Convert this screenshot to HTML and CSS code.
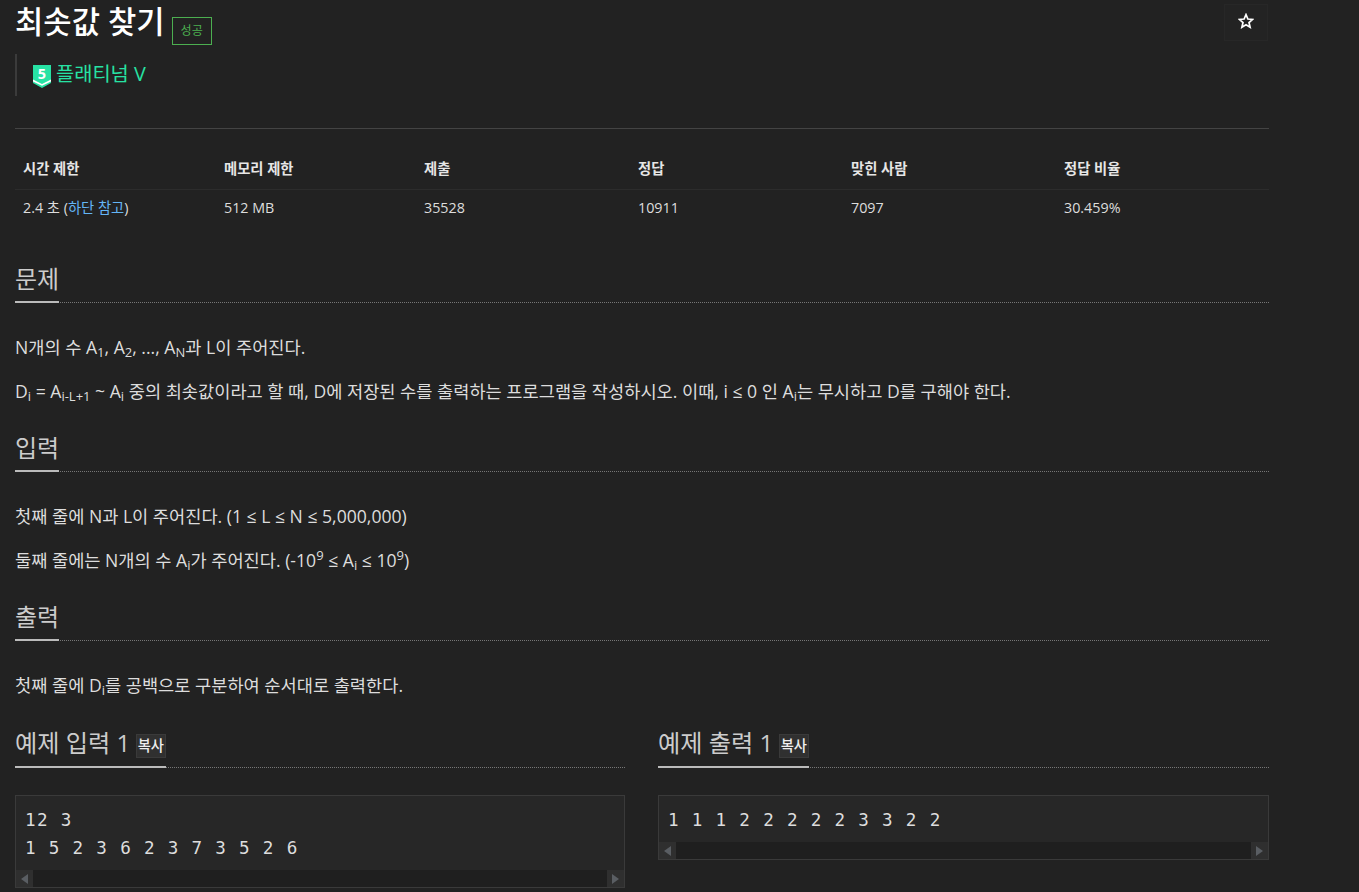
FILE: index.html
```html
<!DOCTYPE html>
<html lang="ko">
<head>
<meta charset="utf-8">
<title>최솟값 찾기</title>
<link rel="stylesheet" href="styles.css">
</head>
<body>
<main class="page">
  <header class="head">
    <div class="title-row">
      <h1 class="title">최솟값 찾기</h1>
      <span class="label">성공</span>
    </div>
    <button class="star" type="button" aria-label="즐겨찾기">
      <svg class="star-icon" width="16" height="16" viewBox="0 0 16 16"><path d="M8 1.6l1.9 4.4 4.7.4-3.6 3.1 1.1 4.7L8 11.7l-4.1 2.5L5 9.5 1.4 6.4l4.7-.4z" fill="none" stroke="#fff" stroke-width="1.7" stroke-linejoin="miter"/></svg>
    </button>
  </header>
  <div class="tier">
    <svg class="tier-icon" width="18" height="24" viewBox="0 0 18 24"><path d="M0 0h18v18l-9 5-9-5z" fill="#27e2a4"/><path d="M0 16.4l9 4.4 9-4.4v-1.8l-9 4.4-9-4.4z" fill="#fff"/><text x="9" y="13.6" text-anchor="middle" class="tier-num">5</text></svg>
    <span class="tier-name">플래티넘 V</span>
  </div>
  <hr class="rule">
  <table class="info">
    <thead>
      <tr><th class="c1">시간 제한</th><th class="c2">메모리 제한</th><th class="c3">제출</th><th class="c4">정답</th><th class="c5">맞힌 사람</th><th>정답 비율</th></tr>
    </thead>
    <tbody>
      <tr><td>2.4 초 (<a href="#">하단 참고</a>)</td><td>512 MB</td><td>35528</td><td>10911</td><td>7097</td><td>30.459%</td></tr>
    </tbody>
  </table>

  <section class="sec sec-first">
    <div class="sec-head"><h2 class="sec-title">문제</h2></div>
    <p>N개의 수 A<sub>1</sub>, A<sub>2</sub>, ..., A<sub>N</sub>과 L이 주어진다.</p>
    <p>D<sub>i</sub> = A<sub>i-L+1</sub> ~ A<sub>i</sub> 중의 최솟값이라고 할 때, D에 저장된 수를 출력하는 프로그램을 작성하시오. 이때, i ≤ 0 인 A<sub>i</sub>는 무시하고 D를 구해야 한다.</p>
  </section>
  <section class="sec">
    <div class="sec-head"><h2 class="sec-title">입력</h2></div>
    <p>첫째 줄에 N과 L이 주어진다. (1 ≤ L ≤ N ≤ 5,000,000)</p>
    <p>둘째 줄에는 N개의 수 A<sub>i</sub>가 주어진다. (-10<sup>9</sup> ≤ A<sub>i</sub> ≤ 10<sup>9</sup>)</p>
  </section>
  <section class="sec">
    <div class="sec-head"><h2 class="sec-title">출력</h2></div>
    <p>첫째 줄에 D<sub>i</sub>를 공백으로 구분하여 순서대로 출력한다.</p>
  </section>

  <div class="samples">
    <section class="sample">
      <div class="sec-head"><h2 class="sec-title">예제 입력 1 <button class="copy" type="button">복사</button></h2></div>
      <div class="code">
        <pre>12 3
1 5 2 3 6 2 3 7 3 5 2 6</pre>
        <div class="scroll"><span class="sb-btn"><i class="arr arr-l"></i></span><span class="sb-track"></span><span class="sb-btn"><i class="arr arr-r"></i></span></div>
      </div>
    </section>
    <section class="sample">
      <div class="sec-head"><h2 class="sec-title">예제 출력 1 <button class="copy" type="button">복사</button></h2></div>
      <div class="code">
        <pre>1 1 1 2 2 2 2 2 3 3 2 2</pre>
        <div class="scroll"><span class="sb-btn"><i class="arr arr-l"></i></span><span class="sb-track"></span><span class="sb-btn"><i class="arr arr-r"></i></span></div>
      </div>
    </section>
  </div>
</main>
</body>
</html>
```
FILE: styles.css
```css
html, body { margin: 0; padding: 0; background: #222; }
body {
  height: 892px;
  overflow: hidden;
  color: #ddd;
  font-family: "Open Sans", "Noto Sans CJK KR", sans-serif;
  font-size: 17.6px;
  line-height: 24px;
}
.page { width: 1254px; margin-left: 15px; }
.head { display: flex; justify-content: space-between; align-items: flex-start; height: 54px; }
.title-row { display: flex; align-items: flex-start; }
.title { margin: 0; font-size: 30.8px; font-weight: 500; line-height: 43px; color: #fff; height: 44px; }
.label {
  margin: 17px 0 0 7px;
  width: 40px; height: 28px;
  box-sizing: border-box;
  border: 1px solid #4caf50;
  color: #4caf50;
  font-size: 12.1px;
  line-height: 26px;
  text-align: center;
}
.star {
  width: 44px; height: 37px; margin: 4px 1px 0 0;
  padding: 0 0 4px 0;
  background: #232323;
  border: 1px solid #272727;
  display: flex; align-items: center; justify-content: center;
}
.tier {
  display: flex; align-items: center; gap: 5px;
  height: 42px;
  border-left: 2px solid #3b3b3b;
  padding-left: 16px;
}
.tier-icon { flex: none; margin-top: 4px; overflow: visible; }
.tier-num { font: 700 14.5px "Open Sans", sans-serif; fill: #fff; }
.tier-name { font-size: 19.8px; color: #27e2a4; margin-bottom: 2px; }
.rule { margin: 32px 0 0; border: 0; border-top: 1px solid #444; }
.info { width: 100%; border-collapse: collapse; table-layout: fixed; margin-top: 21px; font-size: 14.3px; }
.info th { box-sizing: border-box; text-align: left; font-weight: 700; color: #e6e6e6; padding: 7px 8px 8px; line-height: 24px; border-bottom: 1px solid #2c2c2c; }
.info td { padding: 6px 8px 9px; line-height: 24px; color: #ddd; }
.info a { color: #64b5f6; text-decoration: none; }
.c1 { width: 201px; }
.c2 { width: 200px; }
.c3 { width: 214px; }
.c4 { width: 213px; }
.c5 { width: 213px; }
.sec-first { margin-top: 25px; }
.sec-head { border-bottom: 1px dotted #777; height: 49px; margin-bottom: 32px; box-sizing: border-box; }
.sec-title {
  display: inline-block;
  margin: 0;
  height: 49px;
  box-sizing: border-box;
  font-size: 24px;
  font-weight: 400;
  line-height: 34px;
  padding-top: 8px;
  color: #ccc;
  border-bottom: 2px solid #bbb;
  white-space: nowrap;
}
p { margin: 0 0 20px; color: #ddd; height: 24px; white-space: nowrap; }
sub, sup { font-size: 13px; line-height: 0; }
sub { vertical-align: -3px; }
.samples { display: grid; grid-template-columns: 610px 611px; gap: 33px; }
.sample .sec-head { height: 51px; margin-bottom: 27px; }
.sample .sec-title { height: 51px; font-size: 24.2px; padding-top: 9px; }
.copy {
  display: inline-block;
  padding: 0 1px;
  margin-left: -1px;
  height: 24px;
  background: #303030;
  border: 1px solid #3a3a3a;
  color: #eee;
  font: 500 14.3px/22px "Open Sans", "Noto Sans CJK KR", sans-serif;
  vertical-align: 1px;
}
.code { border: 1px solid #3a3a3a; background: #272727; box-sizing: border-box; }
pre {
  margin: 0;
  padding: 10px 9px 8px;
  font-family: "DejaVu Sans Mono", monospace;
  font-size: 17.6px;
  line-height: 28px;
  color: #ddd;
  letter-spacing: 1.3px;
}
.scroll { display: flex; height: 17px; background: #1f1f1f; }
.sb-btn { width: 17px; background: #2f2f2f; display: flex; align-items: center; justify-content: center; }
.sb-track { flex: 1; }
.arr { width: 0; height: 0; border-style: solid; border-color: transparent; border-width: 5.5px 0; }
.arr-l { border-right: 7px solid #5a5e63; }
.arr-r { border-left: 7px solid #5a5e63; }
```
